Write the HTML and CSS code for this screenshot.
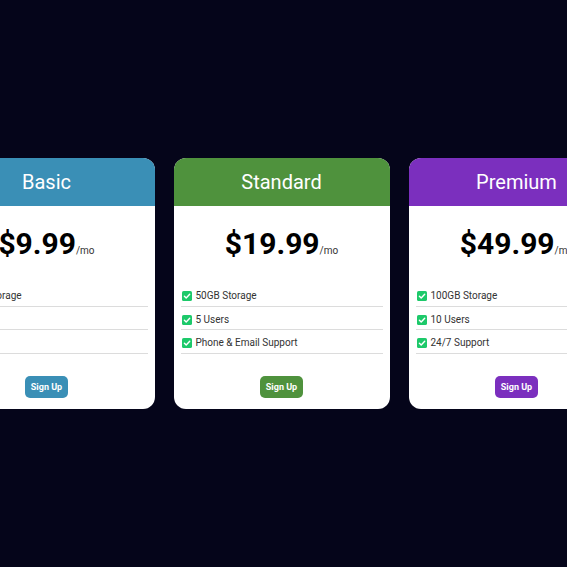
FILE: index.html
```html
<!DOCTYPE html>
<html>
<head>
<meta charset="utf-8">
<link rel="stylesheet" href="styles.css">
</head>
<body>
<div class="plans">
  <div class="card basic">
    <div class="card-head">Basic</div>
    <div class="price">$9.99<span class="per">/mo</span></div>
    <ul class="features">
      <li><svg class="chk" viewBox="0 0 10 10"><rect width="10" height="10" rx="1.6"/><path d="M2.4 5.2 L4.2 7 L7.7 3.2"/></svg>10GB Storage</li>
      <li><svg class="chk" viewBox="0 0 10 10"><rect width="10" height="10" rx="1.6"/><path d="M2.4 5.2 L4.2 7 L7.7 3.2"/></svg>1 User</li>
      <li><svg class="chk" viewBox="0 0 10 10"><rect width="10" height="10" rx="1.6"/><path d="M2.4 5.2 L4.2 7 L7.7 3.2"/></svg>Support</li>
    </ul>
    <div class="actions"><button class="btn">Sign Up</button></div>
  </div>
  <div class="card standard">
    <div class="card-head">Standard</div>
    <div class="price">$19.99<span class="per">/mo</span></div>
    <ul class="features">
      <li><svg class="chk" viewBox="0 0 10 10"><rect width="10" height="10" rx="1.6"/><path d="M2.4 5.2 L4.2 7 L7.7 3.2"/></svg>50GB Storage</li>
      <li><svg class="chk" viewBox="0 0 10 10"><rect width="10" height="10" rx="1.6"/><path d="M2.4 5.2 L4.2 7 L7.7 3.2"/></svg>5 Users</li>
      <li><svg class="chk" viewBox="0 0 10 10"><rect width="10" height="10" rx="1.6"/><path d="M2.4 5.2 L4.2 7 L7.7 3.2"/></svg>Phone &amp; Email Support</li>
    </ul>
    <div class="actions"><button class="btn">Sign Up</button></div>
  </div>
  <div class="card premium">
    <div class="card-head">Premium</div>
    <div class="price">$49.99<span class="per">/mo</span></div>
    <ul class="features">
      <li><svg class="chk" viewBox="0 0 10 10"><rect width="10" height="10" rx="1.6"/><path d="M2.4 5.2 L4.2 7 L7.7 3.2"/></svg>100GB Storage</li>
      <li><svg class="chk" viewBox="0 0 10 10"><rect width="10" height="10" rx="1.6"/><path d="M2.4 5.2 L4.2 7 L7.7 3.2"/></svg>10 Users</li>
      <li><svg class="chk" viewBox="0 0 10 10"><rect width="10" height="10" rx="1.6"/><path d="M2.4 5.2 L4.2 7 L7.7 3.2"/></svg>24/7 Support</li>
    </ul>
    <div class="actions"><button class="btn">Sign Up</button></div>
  </div>
</div>
</body>
</html>
```
FILE: styles.css
```css
html, body {
  margin: 0;
  padding: 0;
  background: #05051a;
  height: 100%;
  overflow: hidden;
}
body {
  font-family: Roboto, "Liberation Sans", sans-serif;
}
.plans {
  display: flex;
  justify-content: center;
  align-items: center;
  gap: 19px;
  height: 567px;
  padding-right: 4px;
}
.card {
  flex: 0 0 216px;
  width: 216px;
  background: #fff;
  border-radius: 12px;
  overflow: hidden;
  display: flex;
  flex-direction: column;
}
.card-head {
  height: 48px;
  display: flex;
  align-items: center;
  justify-content: center;
  color: #fff;
  font-size: 20px;
  font-weight: 400;
}
.basic .card-head, .basic .btn { background: #3a8fb6; }
.standard .card-head, .standard .btn { background: #4f923d; }
.premium .card-head, .premium .btn { background: #7b2fbe; }
.price {
  text-align: center;
  font-size: 30px;
  font-weight: 700;
  color: #000;
  line-height: 36px;
  padding-top: 20px;
  padding-bottom: 14px;
}
.per {
  font-size: 10px;
  font-weight: 400;
  color: #333;
}
.features {
  list-style: none;
  margin: 0 7px;
  padding: 0;
}
.features li {
  display: flex;
  align-items: center;
  gap: 4px;
  font-size: 10px;
  color: #333;
  line-height: 12px;
  padding: 6.75px 0 3.75px 1px;
  border-bottom: 1px solid #dcdcdc;
}
.chk {
  width: 10px;
  height: 10px;
  flex: 0 0 10px;
}
.chk rect { fill: #1dc96a; }
.chk path {
  fill: none;
  stroke: #fff;
  stroke-width: 1.4;
  stroke-linecap: round;
  stroke-linejoin: round;
}
.actions {
  display: flex;
  justify-content: center;
  padding: 22px 0 11px;
}
.btn {
  height: 22px;
  padding: 0 6px;
  border: none;
  border-radius: 5px;
  color: #fff;
  font-family: Roboto, "Liberation Sans", sans-serif;
  font-size: 9px;
  font-weight: 700;
}
```
